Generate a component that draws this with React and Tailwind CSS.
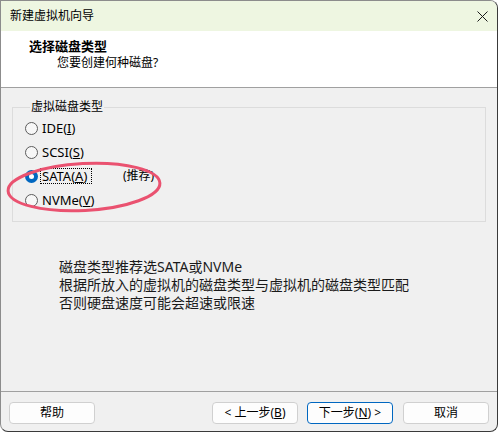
import React from "react";

const F = "font-['Noto_Sans','Noto_Sans_CJK_SC',sans-serif]";

function Radio({ checked, children, extra, focus }) {
  return (
    <div className="h-[24px] flex items-center">
      <div
        className={
          checked
            ? "w-[13px] h-[13px] rounded-full bg-[#0067c0] flex items-center justify-center"
            : "w-[13px] h-[13px] rounded-full border border-[#5c5c5c] bg-[#f7f7f7]"
        }
      >
        {checked && <div className="w-[5px] h-[5px] rounded-full bg-white" />}
      </div>
      <div
        className={
          "ml-[2px] px-[1px] w-[52px] h-[16px] flex items-center text-[13px] leading-[14px] text-black " +
          (focus ? "border border-dotted border-black" : "border border-transparent")
        }
      >
        <span className="whitespace-nowrap">{children}</span>
      </div>
      {extra && <div className="ml-[31px] text-[12px] leading-[14px] text-black">{extra}</div>}
    </div>
  );
}

function Btn({ children, primary }) {
  return (
    <div
      className={
        "w-[86px] h-[22px] rounded-[4px] bg-[#fdfdfd] flex items-center justify-center text-[12px] leading-[14px] text-black border " +
        (primary ? "border-[#0067c0]" : "border-[#d0d0d0]")
      }
    >
      {children}
    </div>
  );
}

export default function App() {
  return (
    <div className={"w-[499px] h-[433px] bg-white relative " + F}>
      <div className="w-[498px] h-[432px] border border-l-[#8c8c8c] border-t-[#8c8c8c] border-r-[#3a3a3a] border-b-[#3a3a3a] rounded-tr-[8px] rounded-br-[8px] rounded-bl-[8px] overflow-hidden flex flex-col bg-[#f0f0f0]">
        {/* title bar */}
        <div className="h-[30px] bg-[#eef6e1] flex items-center justify-between pl-[9px] pr-[9px]">
          <span className="text-[12px] leading-[14px] text-black">新建虚拟机向导</span>
          <svg width="11" height="11" viewBox="0 0 11 11">
            <path d="M0.5 0.5 L10.5 10.5 M10.5 0.5 L0.5 10.5" stroke="#1a1a1a" strokeWidth="1" />
          </svg>
        </div>
        {/* header */}
        <div className="h-[57px] bg-white border-b border-[#a0a0a0] flex flex-col pl-[28px] pt-[7px]">
          <div className="text-[13px] leading-[16px] font-bold text-black">选择磁盘类型</div>
          <div className="ml-[28px] mt-[1px] text-[12px] leading-[16px] text-black">您要创建何种磁盘?</div>
        </div>
        {/* body */}
        <div className="flex-1 flex flex-col">
          <fieldset className="mx-[11px] mt-[11px] border border-[#dcdcdc] pl-[12px] pt-[1px] pb-[9px]">
            <legend className="ml-[5px] px-[1px] text-[12px] leading-[16px] text-black">虚拟磁盘类型</legend>
            <Radio>
              IDE(<u>I</u>)
            </Radio>
            <Radio>
              SCSI(<u>S</u>)
            </Radio>
            <Radio checked focus extra="(推荐)">
              SATA(<u>A</u>)
            </Radio>
            <Radio>
              NVMe(<u>V</u>)
            </Radio>
          </fieldset>
          <div className="mt-[36px] ml-[58px] text-[14px] leading-[18px] text-[#1a1a1a]">
            <div>磁盘类型推荐选SATA或NVMe</div>
            <div>根据所放入的虚拟机的磁盘类型与虚拟机的磁盘类型匹配</div>
            <div>否则硬盘速度可能会超速或限速</div>
          </div>
        </div>
        {/* footer */}
        <div className="border-t border-[#a0a0a0] h-[40px] flex items-start pt-[10px] pl-[8px] pr-[8px]">
          <Btn>帮助</Btn>
          <div className="flex-1" />
          <div className="flex gap-[9px]">
            <Btn>
              &lt; 上一步(<u>B</u>)
            </Btn>
            <Btn primary>
              下一步(<u>N</u>) &gt;
            </Btn>
            <div className="ml-[1px]">
              <Btn>取消</Btn>
            </div>
          </div>
        </div>
      </div>
      <svg className="absolute left-[4px] top-[159px]" width="162" height="58" viewBox="0 0 162 58">
        <ellipse
          cx="80"
          cy="28"
          rx="76"
          ry="23.5"
          fill="none"
          stroke="#ea5270"
          strokeWidth="3"
          transform="rotate(-3 80 28)"
        />
      </svg>
    </div>
  );
}
